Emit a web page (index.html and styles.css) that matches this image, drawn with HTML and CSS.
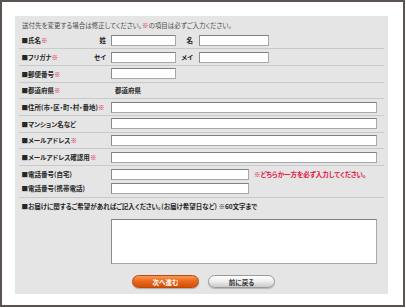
FILE: index.html
```html
<!DOCTYPE html>
<html lang="ja">
<head>
  <meta charset="UTF-8">
  <title>送付先の変更</title>
  <link rel="stylesheet" href="styles.css">
</head>
<body>
  <div class="frame">
    <div class="panel">
      <p class="lead">送付先を変更する場合は修正してください。<span class="req">※</span>の項目は必ずご入力ください。</p>

      <div class="rows">
        <div class="row">
          <div class="label label-name">■氏名<span class="req">※</span></div>
          <span class="sub">姓</span>
          <input type="text" class="field w-short">
          <span class="sub sub-second">名</span>
          <input type="text" class="field w-second">
        </div>
        <div class="row">
          <div class="label label-name">■フリガナ<span class="req">※</span></div>
          <span class="sub">セイ</span>
          <input type="text" class="field w-short">
          <span class="sub sub-second">メイ</span>
          <input type="text" class="field w-second">
        </div>
        <div class="row">
          <div class="label">■郵便番号<span class="req">※</span></div>
          <input type="text" class="field w-short">
        </div>
        <div class="row">
          <div class="label">■都道府県<span class="req">※</span></div>
          <span class="value">都道府県</span>
        </div>
        <div class="row">
          <div class="label">■住所(市・区・町・村・番地)<span class="req">※</span></div>
          <input type="text" class="field w-wide">
        </div>
        <div class="row">
          <div class="label">■マンション名など</div>
          <input type="text" class="field w-wide">
        </div>
        <div class="row">
          <div class="label">■メールアドレス<span class="req">※</span></div>
          <input type="text" class="field w-wide">
        </div>
        <div class="row">
          <div class="label">■メールアドレス確認用<span class="req">※</span></div>
          <input type="text" class="field w-wide">
        </div>
        <div class="row-group">
          <div class="row row-tel">
            <div class="label">■電話番号(自宅)</div>
            <input type="text" class="field w-tel">
            <span class="note">※どちらか一方を必ず入力してください。</span>
          </div>
          <div class="row row-tel">
            <div class="label">■電話番号(携帯電話)</div>
            <input type="text" class="field w-tel">
          </div>
        </div>
        <div class="request">
          <div class="label">■お届けに関するご希望があればご記入ください。(お届け希望日など) ※60文字まで</div>
          <textarea class="memo"></textarea>
        </div>
      </div>

      <div class="buttons">
        <button type="button" class="btn btn-next">次へ進む</button>
        <button type="button" class="btn btn-back">前に戻る</button>
      </div>
    </div>
  </div>
</body>
</html>
```

FILE: styles.css
```css
/* Base */
* {
  margin: 0;
  padding: 0;
  box-sizing: border-box;
}

body {
  background: #fff;
  font-family: "Noto Sans CJK JP", "Noto Sans", sans-serif;
  font-size: 6.5px;
  font-weight: bold;
  color: #262626;
  font-feature-settings: "palt";
}

/* Outer frame */
.frame {
  width: 405px;
  height: 307px;
  border: 2px solid #5a5350;
  padding: 14px 0 0 13px;
  box-shadow: 0 1px 0 #b5b5b5;
}

/* Gray panel */
.panel {
  width: 373px;
  height: 278px;
  background: #e5e5e5;
  padding-top: 5px;
}

.lead {
  padding-left: 7px;
  height: 9px;
  line-height: 9px;
  font-weight: normal;
  color: #4d4d4d;
}

.req {
  color: #e60f3c;
}

/* Form rows */
.rows {
  margin: 2.5px 4px 0;
}

.row {
  display: flex;
  align-items: center;
  height: 16.7px;
  border-bottom: 1px solid #c9c9c9;
}

.label {
  width: 92px;
  padding-left: 2.5px;
  white-space: nowrap;
}

.label-name {
  width: 72px;
}

.sub {
  width: 20px;
  padding-right: 5px;
  text-align: right;
  white-space: nowrap;
}

.sub-second {
  width: 23px;
  padding-right: 6px;
}

.value {
  padding-left: 4px;
}

.field {
  height: 11px;
  background: #fff;
  border: 1px solid #a8a8a8;
  border-top-color: #808080;
  border-left-color: #8c8c8c;
  outline: none;
}

.w-short { width: 65px; }
.w-second { width: 70px; }
.w-wide { width: 266px; }
.w-tel { width: 138px; }

.note {
  margin-left: 5px;
  color: #e60f3c;
}

/* Telephone pair shares one separator */
.row-group {
  padding: 1px 0 2px;
  border-bottom: 1px solid #c9c9c9;
}

.row-tel {
  height: 14px;
  border-bottom: none;
}

/* Request / textarea */
.request {
  padding-top: 4px;
}

.request .label {
  width: auto;
  line-height: 9px;
}

.memo {
  display: block;
  width: 266px;
  height: 45px;
  margin: 8px 0 0 92px;
  resize: none;
  background: #fff;
  border: 1px solid #a8a8a8;
  border-top-color: #808080;
  border-left-color: #8c8c8c;
  outline: none;
}

/* Buttons */
.buttons {
  display: flex;
  justify-content: center;
  gap: 9px;
  margin-top: 11px;
  padding-left: 4px;
}

.btn {
  width: 67px;
  height: 13px;
  border-radius: 7px;
  font-family: inherit;
  font-size: 6.5px;
  font-weight: bold;
  font-feature-settings: "palt";
  cursor: pointer;
}

.btn-next {
  background: linear-gradient(#f59a5a 0%, #ec6a1c 45%, #d44e04 100%);
  border: 1px solid #b84a10;
  color: #fff;
  box-shadow: 0 1px 1px rgba(0, 0, 0, 0.25);
}

.btn-back {
  background: linear-gradient(#ffffff 0%, #f0f0f0 45%, #c9c9c9 100%);
  border: 1px solid #9a9a9a;
  color: #333;
  box-shadow: 0 1px 1px rgba(0, 0, 0, 0.2);
}
```
